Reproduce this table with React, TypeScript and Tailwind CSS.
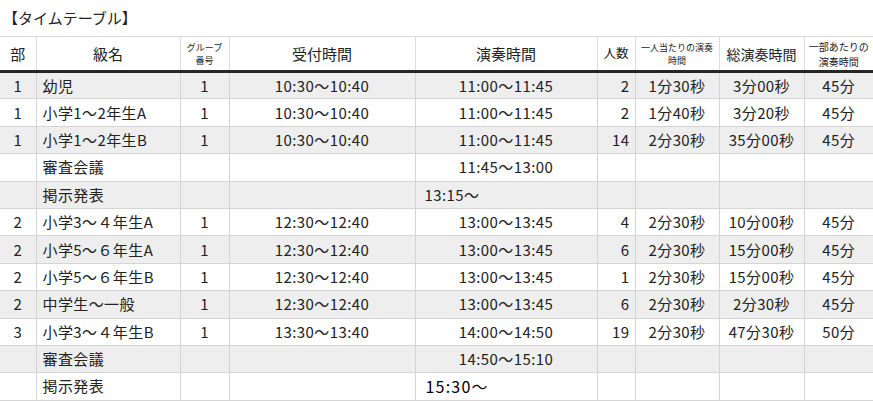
const font = "font-['Noto_Sans_CJK_JP','Noto_Sans',sans-serif]"

type Row = {
  part: string
  name: string
  group: string
  reception: string
  performance: string
  people: string
  perPerson: string
  total: string
  perPart: string
  leftTime?: boolean
  special?: boolean
}

const rows: Row[] = [
  { part: "1", name: "幼児", group: "1", reception: "10:30〜10:40", performance: "11:00〜11:45", people: "2", perPerson: "1分30秒", total: "3分00秒", perPart: "45分" },
  { part: "1", name: "小学1〜2年生A", group: "1", reception: "10:30〜10:40", performance: "11:00〜11:45", people: "2", perPerson: "1分40秒", total: "3分20秒", perPart: "45分" },
  { part: "1", name: "小学1〜2年生B", group: "1", reception: "10:30〜10:40", performance: "11:00〜11:45", people: "14", perPerson: "2分30秒", total: "35分00秒", perPart: "45分" },
  { part: "", name: "審査会議", group: "", reception: "", performance: "11:45〜13:00", people: "", perPerson: "", total: "", perPart: "" },
  { part: "", name: "掲示発表", group: "", reception: "", performance: "13:15〜", people: "", perPerson: "", total: "", perPart: "", leftTime: true },
  { part: "2", name: "小学3〜４年生A", group: "1", reception: "12:30〜12:40", performance: "13:00〜13:45", people: "4", perPerson: "2分30秒", total: "10分00秒", perPart: "45分" },
  { part: "2", name: "小学5〜６年生A", group: "1", reception: "12:30〜12:40", performance: "13:00〜13:45", people: "6", perPerson: "2分30秒", total: "15分00秒", perPart: "45分" },
  { part: "2", name: "小学5〜６年生B", group: "1", reception: "12:30〜12:40", performance: "13:00〜13:45", people: "1", perPerson: "2分30秒", total: "15分00秒", perPart: "45分" },
  { part: "2", name: "中学生〜一般", group: "1", reception: "12:30〜12:40", performance: "13:00〜13:45", people: "6", perPerson: "2分30秒", total: "2分30秒", perPart: "45分" },
  { part: "3", name: "小学3〜４年生B", group: "1", reception: "13:30〜13:40", performance: "14:00〜14:50", people: "19", perPerson: "2分30秒", total: "47分30秒", perPart: "50分" },
  { part: "", name: "審査会議", group: "", reception: "", performance: "14:50〜15:10", people: "", perPerson: "", total: "", perPart: "" },
  { part: "", name: "掲示発表", group: "", reception: "", performance: "15:30〜", people: "", perPerson: "", total: "", perPart: "", leftTime: true, special: true },
]

export default function App() {
  return (
    <div className={`w-[873px] h-[401px] overflow-hidden bg-white text-[#222] ${font}`}>
      <h2 className="h-[36px] pl-[3px] pt-[7px] text-[15px] leading-[22px] text-[#222]">【タイムテーブル】</h2>

      <table className="w-[873px] table-fixed border-collapse">
        <colgroup>
          <col className="w-[36px]" />
          <col className="w-[144px]" />
          <col className="w-[49px]" />
          <col className="w-[186px]" />
          <col className="w-[182px]" />
          <col className="w-[38px]" />
          <col className="w-[84px]" />
          <col className="w-[85px]" />
          <col className="w-[69px]" />
        </colgroup>
        <thead>
          <tr className="h-[35px] border-t border-[#dcdcdc] border-b-[3px] border-b-[#262626] leading-none">
            <th className="font-normal text-[15px] border-r border-[#dcdcdc]">部</th>
            <th className="font-normal text-[15px] border-r border-[#dcdcdc]">級名</th>
            <th className="font-normal text-[9px] leading-[13px] border-r border-[#dcdcdc]">グループ<br />番号</th>
            <th className="font-normal text-[15px] border-r border-[#dcdcdc]">受付時間</th>
            <th className="font-normal text-[15px] border-r border-[#dcdcdc]">演奏時間</th>
            <th className="font-normal text-[12.5px] border-r border-[#dcdcdc] whitespace-nowrap">人数</th>
            <th className="font-normal text-[9px] leading-[13px] border-r border-[#dcdcdc] whitespace-nowrap">一人当たりの演奏<br />時間</th>
            <th className="font-normal text-[14px] border-r border-[#dcdcdc] whitespace-nowrap">総演奏時間</th>
            <th className="font-normal text-[10px] leading-[15px] whitespace-nowrap">一部あたりの<br />演奏時間</th>
          </tr>
        </thead>
        <tbody>
          {rows.map((r, i) => (
            <tr key={i} className={`h-[27.4px] border-b border-[#d4d4d4] text-[15px] leading-[20px] tracking-[0.4px] ${i % 2 === 0 ? "bg-[#eeeeee]" : "bg-white"}`}>
              <td className="text-center border-r border-[#d4d4d4]">{r.part}</td>
              <td className="pl-[6px] border-r border-[#d4d4d4] whitespace-nowrap">{r.name}</td>
              <td className="text-center border-r border-[#d4d4d4]">{r.group}</td>
              <td className="text-center border-r border-[#d4d4d4]">{r.reception}</td>
              {r.special ? (
                <td className="pl-[10px] border-r border-[#d4d4d4] text-[16px] text-black tracking-[1.2px]">{r.performance}</td>
              ) : (
                <td className={`${r.leftTime ? "pl-[9px] text-left" : "text-center"} border-r border-[#d4d4d4]`}>{r.performance}</td>
              )}
              <td className="text-right pr-[5px] border-r border-[#d4d4d4]">{r.people}</td>
              <td className="text-center border-r border-[#d4d4d4]">{r.perPerson}</td>
              <td className="text-center border-r border-[#d4d4d4]">{r.total}</td>
              <td className="text-center">{r.perPart}</td>
            </tr>
          ))}
        </tbody>
      </table>
    </div>
  )
}
